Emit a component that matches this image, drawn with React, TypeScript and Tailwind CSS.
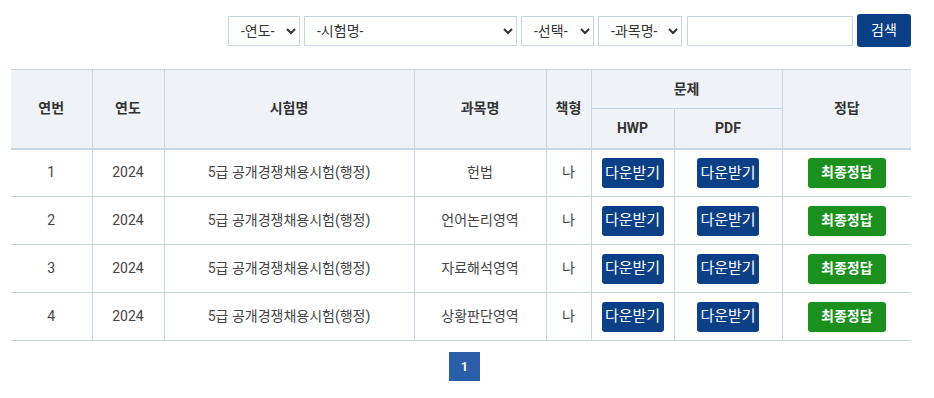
const rows = [
  { no: 1, year: 2024, exam: "5급 공개경쟁채용시험(행정)", subject: "헌법", type: "나" },
  { no: 2, year: 2024, exam: "5급 공개경쟁채용시험(행정)", subject: "언어논리영역", type: "나" },
  { no: 3, year: 2024, exam: "5급 공개경쟁채용시험(행정)", subject: "자료해석영역", type: "나" },
  { no: 4, year: 2024, exam: "5급 공개경쟁채용시험(행정)", subject: "상황판단영역", type: "나" },
];

const font = { fontFamily: 'Roboto, "Noto Sans CJK KR", sans-serif' };

const selectCls =
  "h-[30px] border border-[#c5d6e2] bg-white pl-[8px] pr-[4px] text-[14px] text-[#333] outline-none";

const SearchBar = () => (
  <div className="flex items-center justify-end gap-[4px]">
    <select className={`${selectCls} w-[72px]`}>
      <option>-연도-</option>
    </select>
    <select className={`${selectCls} w-[213px]`}>
      <option>-시험명-</option>
    </select>
    <select className={`${selectCls} w-[73px]`}>
      <option>-선택-</option>
    </select>
    <select className={`${selectCls} w-[84px]`}>
      <option>-과목명-</option>
    </select>
    <input className="ml-[1px] h-[30px] w-[166px] border border-[#c5d6e2] bg-white px-2 text-[14px] outline-none" />
    <button className="h-[33px] w-[54px] rounded-[3px] bg-[#0b3f86] text-[14px] text-white">
      검색
    </button>
  </div>
);

const th = "border-l border-[#c5d6e2] text-[14px] font-bold text-[#333]";
const td = "border-l border-b border-[#c5d6e2] text-center text-[14px] text-[#444]";

export default function App() {
  return (
    <div className="h-[398px] w-[934px] overflow-hidden bg-white" style={font}>
      <div className="ml-[11px] w-[900px] pt-[14px]">
        <SearchBar />

        <table className="mt-[22px] w-[900px] table-fixed border-collapse border-t border-[#c5d6e2]">
          <colgroup>
            <col className="w-[81px]" />
            <col className="w-[72px]" />
            <col className="w-[250px]" />
            <col className="w-[132px]" />
            <col className="w-[45px]" />
            <col className="w-[83px]" />
            <col className="w-[108px]" />
            <col className="w-[129px]" />
          </colgroup>
          <thead className="bg-[#eff3f7]">
            <tr className="h-[39px]">
              <th rowSpan={2} className="border-b-2 border-[#c5d6e2] text-[14px] font-bold text-[#333]">
                연번
              </th>
              <th rowSpan={2} className={`${th} border-b-2`}>연도</th>
              <th rowSpan={2} className={`${th} border-b-2`}>시험명</th>
              <th rowSpan={2} className={`${th} border-b-2`}>과목명</th>
              <th rowSpan={2} className={`${th} border-b-2`}>책형</th>
              <th colSpan={2} className={`${th} border-b`}>문제</th>
              <th rowSpan={2} className={`${th} border-b-2`}>정답</th>
            </tr>
            <tr className="h-[40px]">
              <th className={`${th} border-b-2`}>HWP</th>
              <th className={`${th} border-b-2`}>PDF</th>
            </tr>
          </thead>
          <tbody>
            {rows.map((r) => (
              <tr key={r.no} className="h-[48px]">
                <td className="border-b border-[#c5d6e2] text-center text-[14px] text-[#444]">{r.no}</td>
                <td className={td}>{r.year}</td>
                <td className={td}>{r.exam}</td>
                <td className={td}>{r.subject}</td>
                <td className={`${td} text-[#6b3b3b]`}>{r.type}</td>
                <td className={td}>
                  <button className="h-[30px] w-[62px] rounded-[3px] bg-[#0b3f86] text-[15px] text-white">
                    다운받기
                  </button>
                </td>
                <td className={td}>
                  <button className="h-[30px] w-[62px] rounded-[3px] bg-[#0b3f86] text-[15px] text-white">
                    다운받기
                  </button>
                </td>
                <td className={td}>
                  <button className="h-[30px] w-[78px] rounded-[3px] bg-[#1b901f] text-[14px] font-bold text-white">
                    최종정답
                  </button>
                </td>
              </tr>
            ))}
          </tbody>
        </table>

        <div className="mt-[11px] flex justify-center pl-[7px]">
          <span className="flex h-[29px] w-[31px] items-center justify-center bg-[#2b5ea9] text-[12px] font-bold text-white">
            1
          </span>
        </div>
      </div>
    </div>
  );
}
